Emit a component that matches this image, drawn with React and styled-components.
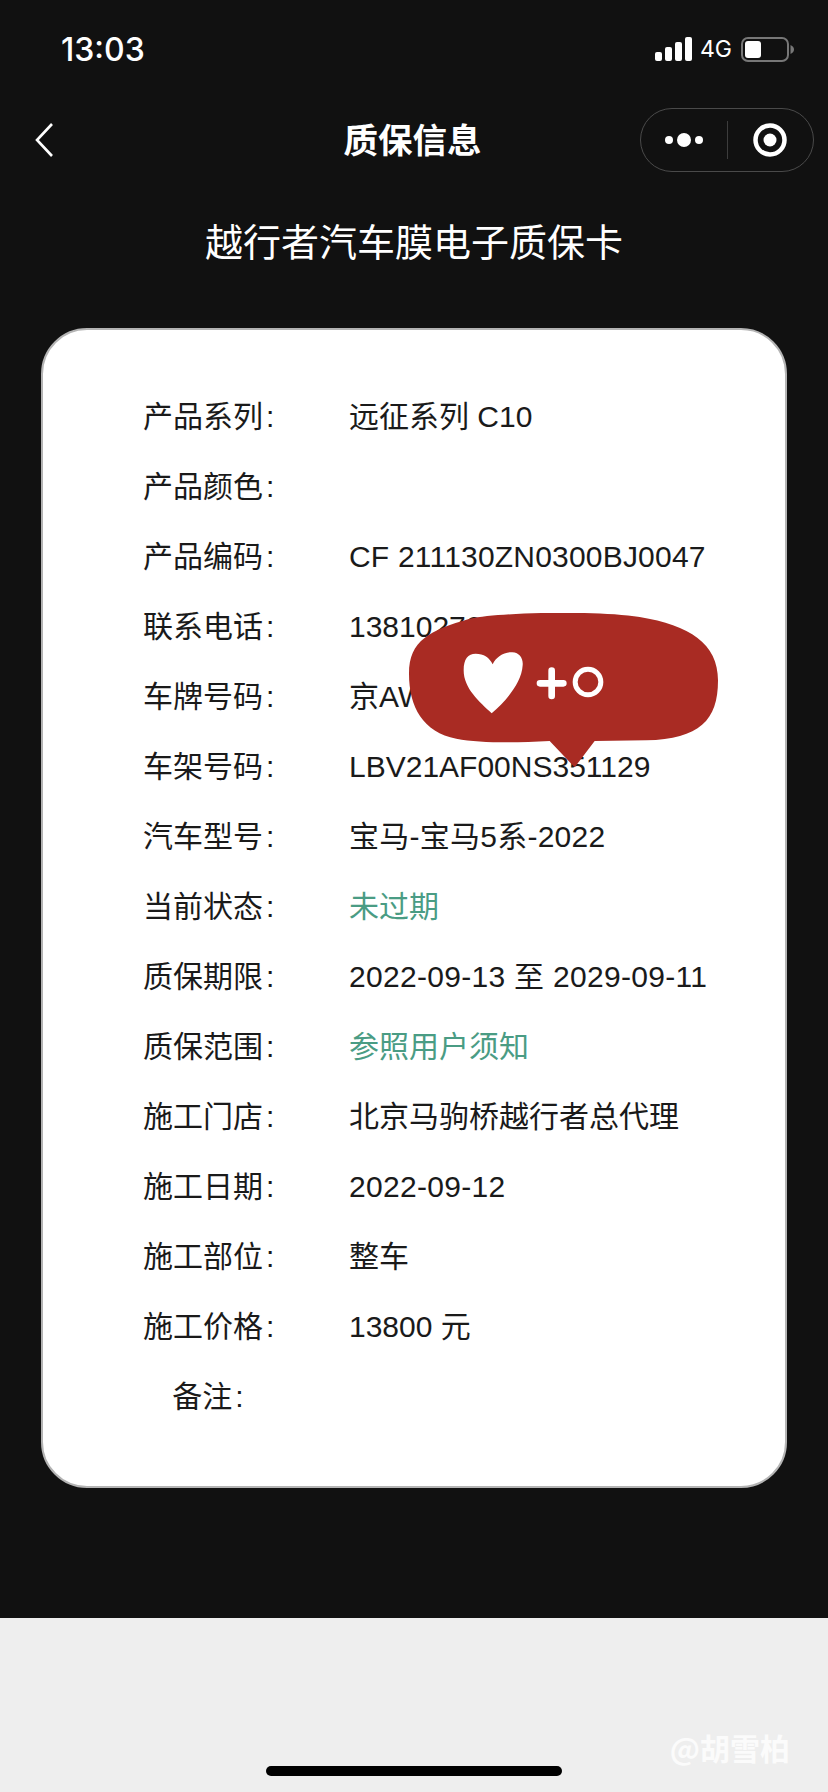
import React from 'react'
import styled, { createGlobalStyle } from 'styled-components'

const GlobalStyle = createGlobalStyle`
  html, body {
    margin: 0;
    padding: 0;
    background: #eeeeee;
  }
  * {
    box-sizing: border-box;
  }
`

const Page = styled.div`
  width: 828px;
  height: 1792px;
  display: flex;
  flex-direction: column;
  overflow: hidden;
  font-family: 'Liberation Sans', 'Noto Sans CJK SC', sans-serif;
`

const Dark = styled.div`
  height: 1618px;
  background: #111111;
  color: #ffffff;
  padding: 0 41px;
`

const StatusBar = styled.div`
  display: flex;
  align-items: center;
  justify-content: space-between;
  height: 98px;
  margin: 0 -7px 0 20px;
`

const Time = styled.div`
  font-family: 'Inter', sans-serif;
  font-size: 32px;
  font-weight: 500;
`

const StatusIcons = styled.div`
  display: flex;
  align-items: center;
`

const Network = styled.span`
  font-family: 'Inter', sans-serif;
  font-size: 23px;
  margin: 0 9px 0 8px;
`

const NavBar = styled.div`
  display: grid;
  grid-template-columns: 1fr auto 1fr;
  align-items: center;
  height: 64px;
  margin: 10px -27px 0;
`

const BackButton = styled.div`
  display: flex;
  margin-left: 21px;
`

const NavTitle = styled.div`
  font-size: 34.5px;
  line-height: 60px;
  font-weight: 700;
  font-family: 'Noto Sans CJK SC', sans-serif;
  margin: 0 3px 4px 0;
`

const Capsule = styled.div`
  justify-self: end;
  width: 174px;
  height: 64px;
  border: 1px solid #4a4a4a;
  border-radius: 32px;
  display: flex;
  align-items: center;
`

const CapsuleSlot = styled.div`
  flex: 1;
  display: flex;
  justify-content: center;
`

const CapsuleDivider = styled.div`
  width: 1px;
  height: 38px;
  background: #3d3d3d;
`

const Heading = styled.h1`
  margin: 42px 0 0;
  text-align: center;
  font-size: 38px;
  line-height: 52px;
  font-weight: 400;
  font-family: 'Noto Sans CJK SC', sans-serif;
`

const Card = styled.div`
  position: relative;
  height: 1160px;
  margin-top: 62px;
  padding: 52px 0 0 100px;
  background: #ffffff;
  border: 2px solid #b4b4b4;
  border-radius: 46px;
  color: #1a1a1a;
`

const Row = styled.div`
  display: flex;
  align-items: center;
  height: 70px;
  font-size: 30px;
  line-height: 40px;
`

const Label = styled.div`
  width: 130px;
  margin-right: 76px;
  text-align: center;
  white-space: nowrap;
`

const Colon = styled.span`
  margin-left: 3px;
`

const Value = styled.div`
  white-space: nowrap;
  letter-spacing: ${p => p.$track || 0}px;
  color: ${p => (p.$accent ? '#4a9c84' : '#1a1a1a')};
`

const LikeBubble = styled.svg`
  position: absolute;
  left: 366px;
  top: 283px;
`

const Footer = styled.div`
  flex: 1;
  display: flex;
  flex-direction: column;
  align-items: center;
  padding-top: 112px;
`

const Watermark = styled.div`
  align-self: flex-end;
  margin-right: 38px;
  font-size: 30px;
  line-height: 34px;
  font-weight: 700;
  color: #fbfbfb;
  font-family: 'Noto Sans CJK SC', sans-serif;
`

const HomeBar = styled.div`
  width: 296px;
  height: 10px;
  margin-top: 2px;
  border-radius: 5px;
  background: #000000;
`

const rows = [
  { label: '产品系列', value: '远征系列 C10' },
  { label: '产品颜色', value: '' },
  { label: '产品编码', value: 'CF 211130ZN0300BJ0047', track: 0.2 },
  { label: '联系电话', value: '13810270000' },
  { label: '车牌号码', value: '京AW00000' },
  { label: '车架号码', value: 'LBV21AF00NS351129' },
  { label: '汽车型号', value: '宝马-宝马5系-2022', track: 0.25 },
  { label: '当前状态', value: '未过期', accent: true },
  { label: '质保期限', value: '2022-09-13 至 2029-09-11', track: 0.3 },
  { label: '质保范围', value: '参照用户须知', accent: true },
  { label: '施工门店', value: '北京马驹桥越行者总代理' },
  { label: '施工日期', value: '2022-09-12', track: 0.3 },
  { label: '施工部位', value: '整车' },
  { label: '施工价格', value: '13800 元' },
  { label: '备注', value: '' },
]

const SignalIcon = () => (
  <svg width="37" height="24" viewBox="0 0 37 24" fill="#fff">
    <rect x="0" y="15" width="7" height="9" rx="2" />
    <rect x="10" y="10" width="7" height="14" rx="2" />
    <rect x="20" y="5" width="7" height="19" rx="2" />
    <rect x="30" y="0" width="7" height="24" rx="2" />
  </svg>
)

const BatteryIcon = () => (
  <svg width="53" height="25" viewBox="0 0 53 25">
    <rect x="1" y="1" width="46" height="23" rx="6" fill="none" stroke="#777" strokeWidth="2" />
    <rect x="4" y="4" width="16" height="17" rx="3" fill="#fff" />
    <path d="M49.5 8 C52 9 53 11 53 12.5 C53 14 52 16 49.5 17 Z" fill="#777" />
  </svg>
)

const BackIcon = () => (
  <svg width="18" height="34" viewBox="0 0 18 34" fill="none" stroke="#fff" strokeWidth="2.6">
    <path d="M17 1 L2 17 L17 33" />
  </svg>
)

const DotsIcon = () => (
  <svg width="38" height="16" viewBox="0 0 38 16" fill="#fff">
    <circle cx="4" cy="8" r="4" />
    <circle cx="19" cy="8" r="7" />
    <circle cx="34" cy="8" r="4" />
  </svg>
)

const TargetIcon = () => (
  <svg width="34" height="34" viewBox="0 0 34 34" fill="#fff">
    <circle cx="17" cy="17" r="14.5" fill="none" stroke="#fff" strokeWidth="4.5" />
    <circle cx="17" cy="17" r="6.5" />
  </svg>
)

const App = () => (
  <Page>
    <GlobalStyle />
    <Dark>
      <StatusBar>
        <Time>13:03</Time>
        <StatusIcons>
          <SignalIcon />
          <Network>4G</Network>
          <BatteryIcon />
        </StatusIcons>
      </StatusBar>
      <NavBar>
        <BackButton>
          <BackIcon />
        </BackButton>
        <NavTitle>质保信息</NavTitle>
        <Capsule>
          <CapsuleSlot>
            <DotsIcon />
          </CapsuleSlot>
          <CapsuleDivider />
          <CapsuleSlot>
            <TargetIcon />
          </CapsuleSlot>
        </Capsule>
      </NavBar>
      <Heading>越行者汽车膜电子质保卡</Heading>
      <Card>
        {rows.map(({ label, value, accent, track }) => (
          <Row key={label}>
            <Label>
              {label}
              <Colon>:</Colon>
            </Label>
            <Value $accent={accent} $track={track}>
              {value}
            </Value>
          </Row>
        ))}
        <LikeBubble width="309" height="154" viewBox="88 68 927 462">
          <path
            d="M88 250 C88 150 150 120 270 85 C370 65 650 60 780 80 C930 105 1015 160 1015 270 C1015 390 960 445 800 450 L645 452 L585 531 L510 452 C400 458 300 458 230 445 C130 425 88 350 88 250 Z"
            fill="#a92b23"
          />
          <path
            d="M336 369 C300 335 252 295 252 240 C252 205 265 190 288 190 C312 190 330 202 339 222 C350 200 372 185 398 186 C420 187 431 205 429 225 C426 280 375 335 336 369 Z"
            fill="#fff"
          />
          <path d="M481 279 H551 M516 241 V317" stroke="#fff" strokeWidth="20" strokeLinecap="round" />
          <circle cx="625" cy="275" r="38.5" fill="none" stroke="#fff" strokeWidth="15" />
        </LikeBubble>
      </Card>
    </Dark>
    <Footer>
      <Watermark>@胡雪柏</Watermark>
      <HomeBar />
    </Footer>
  </Page>
)

export default App
